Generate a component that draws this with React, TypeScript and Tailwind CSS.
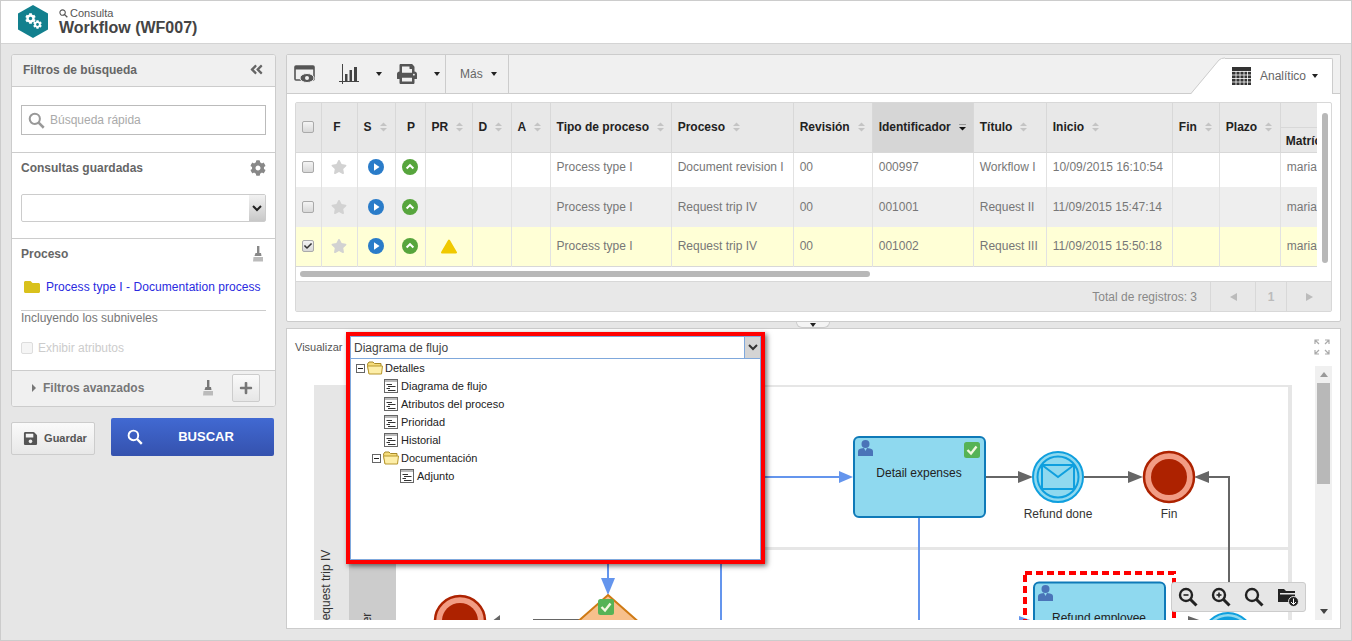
import { FaCog, FaFolder, FaPlus, FaPrint, FaSave, FaStar, FaCheck, FaAngleDoubleLeft } from 'react-icons/fa';

const Caret = ({ cls = 'border-t-[#222]' }: { cls?: string }) => (
    <span className={`inline-block w-0 h-0 border-x-[3px] border-t-[4px] border-x-transparent ${cls}`} />
);

const Glass = ({ size = 20, color = '#999', mark }: { size?: number; color?: string; mark?: 'plus' | 'minus' }) => (
    <svg width={size} height={size} viewBox="0 0 20 20" fill="none" stroke={color}>
        <circle cx="8" cy="8" r="6" strokeWidth="2.4" />
        <path d="M12.5 12.5 L18.5 18.5" strokeWidth="3" />
        {mark && <path d="M5.5 8 H10.5" strokeWidth="1.6" />}
        {mark === 'plus' && <path d="M8 5.5 V10.5" strokeWidth="1.6" />}
    </svg>
);

const Broom = ({ color = '#888' }: { color?: string }) => (
    <svg width="12" height="16" viewBox="0 0 12 16" fill={color}>
        <rect x="5" y="0" width="2.4" height="7" />
        <path d="M3.5 7 H9 L9.5 10 H2.5 Z" />
        <path d="M1.5 11 H11 V15.5 H1 Z" fill="#bbb" />
    </svg>
);

const Box = ({ checked, disabled }: { checked?: boolean; disabled?: boolean }) => (
    <span className={`inline-flex items-center justify-center w-[12px] h-[12px] rounded-[2px] border ${disabled ? 'border-[#ddd] bg-[#f5f5f5]' : 'border-[#aaa] bg-linear-to-b from-[#f4f4f4] to-[#d8d8d8]'}`}>
        {checked && <FaCheck size={8} color="#333" />}
    </span>
);

const Sort = ({ active }: { active?: boolean }) => active ? (
    <svg width="9" height="10" viewBox="0 0 9 10" className="shrink-0" fill="#111">
        <rect x="1" y="2" width="7" height="1" fill="#999" />
        <path d="M1 5 H8 L4.5 8.5 Z" />
    </svg>
) : (
    <svg width="9" height="10" viewBox="0 0 9 10" className="shrink-0" fill="#c4c4c4">
        <path d="M1 4 H8 L4.5 0.5 Z" />
        <path d="M1 6 H8 L4.5 9.5 Z" />
    </svg>
);

const PlayIcon = () => (
    <svg width="16" height="16" viewBox="0 0 16 16" className="block mx-auto">
        <circle cx="8" cy="8" r="8" fill="#2a7cc9" />
        <path d="M6 4.2 L11.5 8 L6 11.8 Z" fill="#fff" />
    </svg>
);

const UpIcon = () => (
    <svg width="16" height="16" viewBox="0 0 16 16" className="block mx-auto">
        <circle cx="8" cy="8" r="8" fill="#57a53d" />
        <path d="M4.6 9.4 L8 6.2 L11.4 9.4" fill="none" stroke="#fff" strokeWidth="2" />
    </svg>
);

const WarnIcon = () => (
    <svg width="16" height="15" viewBox="0 0 16 15" className="block mx-auto">
        <path d="M8 1.5 L15 13.5 H1 Z" fill="#f0c900" stroke="#f0c900" strokeWidth="2" strokeLinejoin="round" />
    </svg>
);

const NodeIcon = () => (
    <svg width="14" height="14" viewBox="0 0 14 14" className="shrink-0">
        <rect x="0.5" y="0.5" width="13" height="13" fill="#fff" stroke="#666" />
        <rect x="1" y="1" width="12" height="2" fill="#bbb" />
        <path d="M2.5 5.5 H8 M4 7.5 H11.5 M2.5 9.5 H6 M4 11.5 H11.5" stroke="#333" />
    </svg>
);

const OpenFolder = () => (
    <svg width="16" height="14" viewBox="0 0 16 14" className="shrink-0">
        <path d="M0.5 3 L2 1 H6 L7.5 2.5 H14 V12.5 H2 Z" fill="#f5dc7a" stroke="#a88a2a" />
        <path d="M0.5 5 H13 L15.5 5 L14.5 13 H2 Z" fill="#fdeea8" stroke="#b8982e" />
    </svg>
);

const MinusBox = () => (
    <svg width="9" height="9" viewBox="0 0 9 9" className="shrink-0">
        <rect x="0.5" y="0.5" width="8" height="8" fill="#fff" stroke="#666" />
        <path d="M2 4.5 H7" stroke="#222" />
    </svg>
);

const columns = [
    { label: '', w: 25 },
    { label: 'F', w: 36, center: true, shift: 'pr-[4px]' },
    { label: 'S', w: 38, sort: true },
    { label: 'P', w: 30, center: true, shift: 'pl-[2px]' },
    { label: 'PR', w: 47, sort: true },
    { label: 'D', w: 39, sort: true },
    { label: 'A', w: 39, sort: true },
    { label: 'Tipo de proceso', w: 121, sort: true },
    { label: 'Proceso', w: 122, sort: true },
    { label: 'Revisión', w: 79, sort: true },
    { label: 'Identificador', w: 101, sort: true, active: true },
    { label: 'Título', w: 73, sort: true },
    { label: 'Inicio', w: 126, sort: true },
    { label: 'Fin', w: 47, sort: true },
    { label: 'Plazo', w: 61, sort: true },
];

const rows = [
    { bg: 'bg-white', pad: 'pb-[5px]', h: 'h-[35px]', proc: 'Document revision I', id: '000997', title: 'Workflow I', start: '10/09/2015 16:10:54' },
    { bg: 'bg-[#eeeeee]', pad: '', h: 'h-[40px]', proc: 'Request trip IV', id: '001001', title: 'Request II', start: '11/09/2015 15:47:14' },
    { bg: 'bg-[#ffffd6] border-b border-[#d8d8d8]', pad: '', h: 'h-[39px]', proc: 'Request trip IV', id: '001002', title: 'Request III', start: '11/09/2015 15:50:18', checked: true, warn: true },
];

function Sidebar() {
    return <div className="w-[265px] shrink-0">
        <div className="bg-white border border-[#ccc] rounded-[3px] overflow-hidden">
            <div className="h-[32px] bg-[#f0f0f0] border-b border-[#ccc] flex items-center justify-between pl-[11px] pr-[11px] pb-[2px]">
                <span className="text-[12px] font-bold text-[#666]">Filtros de búsqueda</span>
                <FaAngleDoubleLeft size={15} color="#666" />
            </div>
            <div className="h-[66px] border-b border-[#ccc] pt-[18px] px-[9px]">
                <div className="h-[30px] border border-[#bbb] flex items-center pl-[6px] gap-[5px]">
                    <Glass size={17} />
                    <span className="text-[12px] text-[#aaa]">Búsqueda rápida</span>
                </div>
            </div>
            <div className="h-[86px] border-b border-[#ccc] px-[9px] pt-[7px]">
                <div className="flex items-center justify-between h-[16px]">
                    <span className="text-[12px] font-bold text-[#666]">Consultas guardadas</span>
                    <FaCog size={16} color="#888" />
                </div>
                <div className="mt-[18px] h-[28px] border border-[#ccc] rounded-[2px] flex justify-end">
                    <div className="w-[16px] bg-linear-to-b from-[#f2f2f2] to-[#c8c8c8] flex items-center justify-center">
                        <svg width="10" height="7" viewBox="0 0 10 7"><path d="M1 1 L5 5 L9 1" fill="none" stroke="#222" strokeWidth="2" /></svg>
                    </div>
                </div>
            </div>
            <div className="h-[132px] border-b border-[#ccc] px-[9px] pt-[7px]">
                <div className="flex items-center justify-between h-[16px] pr-[2px]">
                    <span className="text-[12px] font-bold text-[#666]">Proceso</span>
                    <Broom />
                </div>
                <div className="mt-[17px] flex items-center gap-[6px] pl-[3px] h-[16px]">
                    <FaFolder size={16} color="#d9c11c" />
                    <span className="text-[12px] tracking-[0.05px] text-[#2a2ae0] whitespace-nowrap">Process type I - Documentation process</span>
                </div>
                <div className="mt-[15px] border-t border-[#ccc] text-[12px] leading-[14px] text-[#777]">Incluyendo los subniveles</div>
                <div className="mt-[14px] flex items-center gap-[5px]">
                    <Box disabled />
                    <span className="text-[12px] text-[#ccc]">Exhibir atributos</span>
                </div>
            </div>
            <div className="h-[35px] bg-[#f0f0f0] flex items-center pl-[20px] pr-[15px] pb-[2px]">
                <span className="w-0 h-0 border-y-[4px] border-l-[4px] border-y-transparent border-l-[#777]" />
                <span className="ml-[7px] text-[12px] font-bold text-[#777]">Filtros avanzados</span>
                <span className="ml-auto"><Broom color="#777" /></span>
                <span className="ml-[18px] w-[28px] h-[28px] rounded-[2px] border border-[#ccc] bg-linear-to-b from-[#fafafa] to-[#e6e6e6] flex items-center justify-center">
                    <FaPlus size={14} color="#777" />
                </span>
            </div>
        </div>
        <div className="mt-[11px] flex items-center gap-[16px] w-[263px]">
            <button type="button" className="w-[84px] h-[33px] mt-[3px] pl-[4px] rounded-[2px] border border-[#ccc] bg-linear-to-b from-[#fafafa] to-[#e8e8e8] flex items-center justify-center gap-[6px] text-[11px] font-bold text-[#555]">
                <FaSave size={15} color="#555" />
                Guardar
            </button>
            <button type="button" className="relative w-[163px] h-[38px] rounded-[2px] bg-linear-to-b from-[#4169d2] to-[#3552ae] text-white text-[13px] font-bold flex items-center justify-center pl-[27px]">
                <span className="absolute left-[16px] top-[11px]"><Glass size={16} color="#fff" /></span>
                BUSCAR
            </button>
        </div>
    </div>;
}

function Toolbar() {
    return <div className="h-[39px] bg-[#f0f0f0] border-b border-[#ccc] flex items-stretch shrink-0">
        <div className="w-[159px] border-r border-[#ccc] flex items-center pl-[7px]">
            <svg width="21" height="18" viewBox="0 0 21 18" className="shrink-0">
                <rect x="1" y="1" width="19" height="14" rx="1" fill="none" stroke="#555" strokeWidth="1.6" />
                <rect x="1" y="1" width="19" height="3.5" fill="#555" />
                <ellipse cx="13" cy="13" rx="7" ry="4.5" fill="#555" stroke="#f0f0f0" />
                <circle cx="13" cy="13" r="2" fill="#f0f0f0" />
            </svg>
            <svg width="21" height="21" viewBox="0 0 21 21" className="ml-[24px] shrink-0" fill="#444">
                <path d="M3.5 0 V20 M0 17.5 H20" stroke="#444" fill="none" />
                <rect x="6" y="10" width="2.5" height="7.5" />
                <rect x="10.5" y="6" width="2.5" height="11.5" />
                <rect x="15" y="3" width="3" height="14.5" />
            </svg>
            <span className="ml-[16px] flex"><Caret /></span>
            <span className="ml-[15px] flex"><FaPrint size={20} color="#555" /></span>
            <span className="ml-[17px] flex"><Caret /></span>
        </div>
        <div className="w-[63px] border-r border-[#ccc] flex items-center pl-[14px] gap-[8px]">
            <span className="text-[12px] text-[#666]">Más</span>
            <Caret />
        </div>
        <div className="ml-auto flex items-end mr-[7px]">
            <svg width="34" height="37" viewBox="0 0 34 37" className="block mb-[-1px]">
                <path d="M0 37 L28 3 Q30 1 34 1 V37 Z" fill="#fff" />
                <path d="M0 36.5 L28 3 Q30 1 34 1" fill="none" stroke="#ccc" />
            </svg>
            <div className="h-[36px] mb-[-1px] w-[108px] bg-white border-t border-r border-[#ccc] rounded-tr-[2px] flex items-center pl-[7px] pb-[2px]">
                <svg width="19" height="18" viewBox="0 0 19 18" className="shrink-0">
                    <rect x="0" y="0" width="19" height="18" fill="#333" />
                    <path d="M0 4.5 H19 M0 8 H19 M0 11.5 H19 M0 15 H19 M4 4 V18 M8 4 V18 M12 4 V18 M15.5 4 V18" stroke="#fff" strokeWidth="0.8" />
                </svg>
                <span className="ml-[9px] text-[12px] text-[#666]">Analítico</span>
                <span className="ml-[6px] flex"><Caret /></span>
            </div>
        </div>
    </div>;
}

function ResultTable() {
    return <div className="mx-[8px] mt-[8px] border border-[#d8d8d8] rounded-[2px] h-[210px] flex flex-col">
        <div className="relative h-[178px] overflow-hidden">
            <div className="w-[1021px] overflow-hidden">
                <table className="table-fixed border-collapse w-[1085px]">
                    <colgroup>
                        {columns.map((c, i) => <col key={i} style={{ width: c.w }} />)}
                        <col style={{ width: 100 }} />
                    </colgroup>
                    <thead>
                        <tr className="h-[49px]">
                            {columns.map((c, i) => (
                                <th key={i} className={`border-r border-b border-[#d8d8d8] p-0 text-[12px] font-bold text-[#222] ${c.active ? 'bg-[#d6d6d6]' : 'bg-[#e8e8e8]'}`}>
                                    {i === 0 ? <div className="flex justify-center"><Box /></div> : (
                                        <div className={`flex items-center whitespace-nowrap ${c.center ? `justify-center ${c.shift}` : 'pl-[6px] gap-[7px]'}`}>
                                            {c.label}
                                            {c.sort && <Sort active={c.active} />}
                                        </div>
                                    )}
                                </th>
                            ))}
                            <th className="border-b border-[#d8d8d8] p-0 bg-[#e8e8e8] text-left text-[12px] font-bold text-[#222] align-top">
                                <div className="h-[25px] border-b border-[#d8d8d8]" />
                                <div className="pl-[5px] pt-[4px] whitespace-nowrap">Matrícula</div>
                            </th>
                        </tr>
                    </thead>
                    <tbody className="text-[12px] text-[#777]">
                        {rows.map((r, i) => {
                            const cell = `border-r border-[#e2e2e2] p-0 ${r.pad}`;
                            const text = `${cell} pl-[6px] whitespace-nowrap`;
                            return <tr key={i} className={`${r.bg} ${r.h}`}>
                                <td className={cell}><div className="flex justify-center"><Box checked={r.checked} /></div></td>
                                <td className={cell}><div className="flex justify-center"><FaStar size={16} color="#d2d2d2" /></div></td>
                                <td className={cell}><PlayIcon /></td>
                                <td className={cell}><UpIcon /></td>
                                <td className={cell}>{r.warn && <WarnIcon />}</td>
                                <td className={cell} />
                                <td className={cell} />
                                <td className={text}>Process type I</td>
                                <td className={text}>{r.proc}</td>
                                <td className={text}>00</td>
                                <td className={text}>{r.id}</td>
                                <td className={text}>{r.title}</td>
                                <td className={text}>{r.start}</td>
                                <td className={cell} />
                                <td className={cell} />
                                <td className={text}>maria</td>
                            </tr>;
                        })}
                    </tbody>
                </table>
            </div>
            <div className="h-[6px] w-[570px] ml-[4px] mt-[4px] rounded-[3px] bg-[#b8b8b8]" />
            <div className="absolute right-[3px] top-[10px] w-[6px] h-[150px] rounded-[3px] bg-[#b8b8b8]" />
        </div>
        <div className="h-[30px] bg-[#e8e8e8] border-t border-[#d8d8d8] flex items-stretch justify-end text-[12px] text-[#888]">
            <div className="flex items-center pr-[13px]">Total de registros: 3</div>
            <div className="w-[45px] border-l border-[#d8d8d8] flex items-center justify-center">
                <span className="w-0 h-0 border-y-[4px] border-r-[7px] border-y-transparent border-r-[#bbb]" />
            </div>
            <div className="w-[31px] border-l border-[#d8d8d8] flex items-center justify-center font-bold text-[#bbb]">1</div>
            <div className="w-[45px] border-l border-[#d8d8d8] flex items-center justify-center">
                <span className="w-0 h-0 border-y-[4px] border-l-[7px] border-y-transparent border-l-[#bbb]" />
            </div>
        </div>
    </div>;
}

const Envelope = ({ cx, cy, filled }: { cx: number; cy: number; filled?: boolean }) => (
    <g>
        <circle cx={cx} cy={cy} r="25" fill="#8fd9ef" stroke="#0f9fde" strokeWidth="2" />
        <circle cx={cx} cy={cy} r="20.5" fill={filled ? '#0f9fde' : 'none'} stroke="#0f9fde" strokeWidth="2" />
        <rect x={cx - 16} y={cy - 12} width="32" height="24" fill={filled ? '#0f9fde' : '#8fd9ef'} stroke={filled ? '#8fd9ef' : '#0f9fde'} strokeWidth="2" />
        <path d={`M${cx - 16} ${cy - 12} L${cx} ${cy} L${cx + 16} ${cy - 12}`} fill="none" stroke={filled ? '#8fd9ef' : '#0f9fde'} strokeWidth="2" />
    </g>
);

const Person = ({ x, y }: { x: number; y: number }) => (
    <g fill="#4a74b8" transform={`translate(${x} ${y})`}>
        <circle cx="7.5" cy="4" r="4" />
        <path d="M0 16 V11.5 Q0 9 3 8.5 L6 8 L7.5 11 L9 8 L12 8.5 Q15 9 15 11.5 V16 Z" />
    </g>
);

const CheckBadge = ({ x, y }: { x: number; y: number }) => (
    <g transform={`translate(${x} ${y})`}>
        <rect width="16" height="16" rx="2.5" fill="#56b356" />
        <path d="M3.5 8 L7 11.5 L12.5 4.5" fill="none" stroke="#f4f8e0" strokeWidth="2.4" />
    </g>
);

function Diagram() {
    return <svg width="1028" height="254" viewBox="287 366 1028 254" className="block shrink-0 font-['Liberation_Sans',sans-serif]">
        <rect x="314" y="385" width="978" height="2" fill="#e6e6e6" />
        <rect x="1288" y="385" width="4" height="235" fill="#e6e6e6" />
        <rect x="314" y="385" width="35" height="235" fill="#e6e6e6" />
        <rect x="349" y="547" width="943" height="3" fill="#e6e6e6" />
        <rect x="349" y="550" width="47" height="70" fill="#cccccc" />
        <text transform="translate(330 629) rotate(-90)" fontSize="12" fill="#333">Request trip IV</text>
        <text transform="translate(371 660) rotate(-90)" fontSize="12" fill="#333">Manager</text>

        {/* blue flows */}
        <path d="M760 477 H840 M919 518 V620 M721 555 V620 M608 555 V582" stroke="#6495ed" strokeWidth="2" fill="none" />
        <path d="M839 471 L853 477 L839 483 Z" fill="#6495ed" />
        <path d="M601 578 H615 L608 595 Z" fill="#6495ed" />
        <path d="M1019 616 L1033 621 H1019 Z" fill="#6495ed" />

        {/* grey flows */}
        <path d="M985 477 H1020 M1084 477 H1130 M1205 477 H1229 V590 M533 620 H582" stroke="#666" strokeWidth="2" fill="none" />
        <path d="M1018 471 L1033 477 L1018 483 Z M1128 471 L1143 477 L1128 483 Z M1209 471 L1194 477 L1209 483 Z M1188 616 L1202 621 H1188 Z M500 615 V625 H487 Z" fill="#666" />

        {/* tasks */}
        <rect x="854" y="437" width="131" height="80" rx="5" fill="#8fd9ef" stroke="#0f7ab8" strokeWidth="2" />
        <Person x={858} y={440} />
        <CheckBadge x={964} y={442} />
        <text x="919" y="477" textAnchor="middle" fontSize="12" fill="#222">Detail expenses</text>

        <rect x="1034" y="582.5" width="131" height="80" rx="5" fill="#8fd9ef" stroke="#0f7ab8" strokeWidth="2" />
        <Person x={1038} y={585} />
        <text x="1099" y="622" textAnchor="middle" fontSize="12" fill="#222">Refund employee</text>
        <rect x="1025" y="573" width="149" height="70" fill="none" stroke="#f00" strokeWidth="4" strokeDasharray="7 4" />

        {/* events */}
        <Envelope cx={1058} cy={477} />
        <text x="1058" y="518" textAnchor="middle" fontSize="12" fill="#333">Refund done</text>
        <circle cx="1169" cy="477" r="25" fill="#f29c84" stroke="#ad2200" strokeWidth="2.5" />
        <circle cx="1169" cy="477" r="18" fill="#ad2200" />
        <text x="1169" y="518" textAnchor="middle" fontSize="12" fill="#333">Fin</text>
        <Envelope cx={1228} cy={638} filled />

        <circle cx="460" cy="621" r="25" fill="#f29c84" stroke="#ad2200" strokeWidth="2.5" />
        <circle cx="460" cy="621" r="18" fill="#ad2200" />

        {/* gateway */}
        <path d="M608 595 L650 632 L608 669 L566 632 Z" fill="#f7c08c" stroke="#cf7a14" strokeWidth="2" />
        <CheckBadge x={598} y={599} />
    </svg>;
}

function ViewPicker() {
    const tree = [
        { label: 'Detalles', indent: 5, folder: true },
        { label: 'Diagrama de flujo', indent: 33 },
        { label: 'Atributos del proceso', indent: 33 },
        { label: 'Prioridad', indent: 33 },
        { label: 'Historial', indent: 33 },
        { label: 'Documentación', indent: 21, folder: true },
        { label: 'Adjunto', indent: 49 },
    ];
    return <div className="absolute left-[59px] top-[3px] w-[419px] h-[232px] border-[4px] border-[#f00] shadow-[2px_2px_5px_rgba(0,0,0,0.55)] bg-white z-10">
        <div className="h-[23px] border border-[#7fa8dc] flex items-stretch">
            <div className="flex-1 flex items-center pl-[3px] text-[12px] text-[#444]">Diagrama de flujo</div>
            <div className="w-[16px] border-l border-[#7fa8dc] bg-[#d4d4d4] flex items-center justify-center">
                <svg width="10" height="7" viewBox="0 0 10 7"><path d="M1 1 L5 5 L9 1" fill="none" stroke="#333" strokeWidth="2" /></svg>
            </div>
        </div>
        <div className="h-[201px] border-x border-b border-[#7fa8dc]">
            {tree.map(n => (
                <div key={n.label} style={{ paddingLeft: n.indent }} className={`h-[18px] flex items-center text-[11px] text-[#222] ${n.folder ? 'gap-[2px]' : 'gap-[3px]'}`}>
                    {n.folder ? <><MinusBox /><OpenFolder /></> : <NodeIcon />}
                    <span>{n.label}</span>
                </div>
            ))}
        </div>
    </div>;
}

function DetailPanel() {
    return <div className="relative flex-1 bg-white border border-[#ccc] mt-[6px]">
        <div className="absolute left-[509px] top-[-7px] w-[34px] h-[6px] bg-[#f4f4f4] border-b border-x border-[#ccc] rounded-b-[6px] flex justify-center pt-[1px]">
            <Caret />
        </div>
        <div className="h-[37px] flex items-center pl-[8px] pb-[1px] relative">
            <span className="text-[11px] text-[#555]">Visualizar</span>
            <svg width="16" height="16" viewBox="0 0 16 16" className="ml-auto mr-[10px]" fill="none" stroke="#aaa" strokeWidth="1.2">
                <path d="M1 5 V1 H5 M11 1 H15 V5 M15 11 V15 H11 M5 15 H1 V11 M1 1 L5 5 M15 1 L11 5 M15 15 L11 11 M1 15 L5 11" />
            </svg>
        </div>
        <ViewPicker />
        <div className="flex h-[254px]">
            <Diagram />
            <div className="w-[17px] bg-[#f0f0f0] relative flex flex-col items-center justify-between py-[6px]">
                <span className="w-0 h-0 border-x-[4px] border-b-[5px] border-x-transparent border-b-[#999]" />
                <span className="w-0 h-0 border-x-[4px] border-t-[5px] border-x-transparent border-t-[#444]" />
                <div className="absolute left-[2px] top-[17px] w-[13px] h-[101px] bg-[#b8b8b8]" />
            </div>
        </div>
        <div className="absolute left-[884px] top-[253px] w-[135px] h-[30px] bg-[#e6e6e6] border border-[#ccc] rounded-[3px] flex items-center pl-[6px] gap-[13px]">
            <Glass size={20} color="#222" mark="minus" />
            <Glass size={20} color="#222" mark="plus" />
            <Glass size={20} color="#222" />
            <svg width="22" height="20" viewBox="0 0 22 20">
                <path d="M1 2 H7 L9 4 H18 V15 H1 Z" fill="#222" />
                <path d="M3 6 H19 V7.5 H3 Z" fill="#e6e6e6" />
                <circle cx="16.5" cy="14.5" r="5" fill="#222" stroke="#e6e6e6" />
                <path d="M16.5 11.5 V17 M14 15 L16.5 17.5 L19 15" stroke="#fff" fill="none" />
            </svg>
        </div>
    </div>;
}

export default function App() {
    return <div className="w-[1352px] h-[641px] overflow-hidden bg-[#e6e6e6] border border-[#ccc] flex flex-col font-['Liberation_Sans',Arial,sans-serif]">
        <header className="h-[43px] shrink-0 bg-white border-b border-[#d4d4d4] flex items-center pl-[17px]">
            <svg width="30" height="33" viewBox="0 0 30 33" className="shrink-0 mb-[1px]">
                <polygon points="15,0 30,8.5 30,24.5 15,33 0,24.5 0,8.5" fill="#12808e" />
                <FaCog x={7} y={8} size={11} color="#fff" />
                <FaCog x={15} y={15} size={9} color="#fff" />
            </svg>
            <div className="ml-[11px] flex flex-col">
                <span className="flex items-center gap-[2px] text-[11px] leading-[11px] text-[#555]">
                    <Glass size={9} color="#555" />
                    Consulta
                </span>
                <span className="text-[16px] leading-[17px] font-bold text-[#444]">Workflow (WF007)</span>
            </div>
        </header>
        <main className="flex-1 flex gap-[10px] pl-[10px] pr-[10px] pt-[10px] pb-[11px] min-h-0">
            <Sidebar />
            <div className="flex-1 flex flex-col min-w-0">
                <div className="h-[268px] shrink-0 bg-white border border-[#ccc] rounded-[2px] flex flex-col">
                    <Toolbar />
                    <ResultTable />
                </div>
                <DetailPanel />
            </div>
        </main>
    </div>;
}
